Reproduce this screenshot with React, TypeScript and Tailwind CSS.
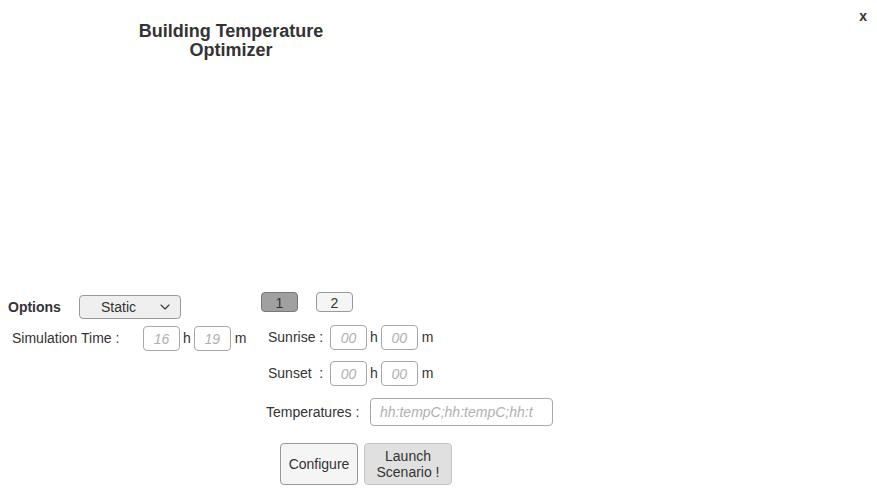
import { ChevronDown } from "lucide-react";

function TimeInput({ placeholder }: { placeholder: string }) {
  return (
    <input
      placeholder={placeholder}
      className="w-[37px] h-[25px] rounded-[4px] border border-[#a8a8a8] bg-white text-center text-[14px] italic text-[#333] placeholder:text-[#b0b0b0] outline-none"
    />
  );
}

function TimeRow({ label, labelWidth, a, b }: { label: string; labelWidth: string; a: string; b: string }) {
  return (
    <div className="flex items-center h-[25px]">
      <span className={labelWidth}>{label}</span>
      <TimeInput placeholder={a} />
      <span className="mx-[3px]">h</span>
      <TimeInput placeholder={b} />
      <span className="ml-[4px]">m</span>
    </div>
  );
}

export default function App() {
  return (
    <div
      className="w-[877px] h-[495px] bg-white text-[14px] text-[#333] overflow-hidden"
      style={{ fontFamily: '"Liberation Sans", Arial, sans-serif' }}
    >
      <div className="flex">
        <div className="w-[462px] pt-[22px] text-center text-[18px] font-bold leading-[19px] text-[#333]">
          Building Temperature
          <br />
          Optimizer
        </div>
        <div className="flex-1 flex justify-end pr-[10px] pt-[6px]">
          <span className="font-bold text-[14px]">x</span>
        </div>
      </div>

      <div className="flex mt-[232px]">
        {/* left panel */}
        <div className="w-[261px] pl-[8px] pt-[3px] flex flex-col">
          <div className="flex items-center h-[24px]">
            <span className="w-[71px] font-bold">Options</span>
            <button className="w-[102px] h-[24px] rounded-[4px] border border-[#999] bg-[#efefef] flex items-center pl-[21px] pr-[7px]">
              <span className="flex-1 text-left">Static</span>
              <ChevronDown className="w-[16px] h-[16px]" strokeWidth={1.6} />
            </button>
          </div>
          <div className="mt-[7px] pl-[4px]">
            <TimeRow label="Simulation Time :" labelWidth="w-[131px]" a="16" b="19" />
          </div>
        </div>

        {/* right panel */}
        <div className="flex flex-col">
          <div className="flex gap-[18px]">
            <button className="w-[37px] h-[20px] rounded-[4px] border border-[#777] bg-[#a0a0a0]">1</button>
            <button className="w-[37px] h-[20px] rounded-[4px] border border-[#999] bg-[#f5f5f5]">2</button>
          </div>
          <div className="mt-[13px] pl-[7px] flex flex-col gap-[11px]">
            <TimeRow label="Sunrise :" labelWidth="w-[62px]" a="00" b="00" />
            <TimeRow label="Sunset  :" labelWidth="w-[62px] whitespace-pre" a="00" b="00" />
          </div>
          <div className="mt-[12px] pl-[5px] flex items-center">
            <span className="w-[104px]">Temperatures :</span>
            <input
              placeholder="hh:tempC;hh:tempC;hh:t"
              className="w-[183px] h-[28px] rounded-[4px] border border-[#a8a8a8] bg-white px-[9px] text-[14px] italic placeholder:text-[#b0b0b0] outline-none"
            />
          </div>
          <div className="mt-[17px] pl-[19px] flex gap-[6px]">
            <button className="w-[78px] h-[42px] rounded-[4px] border border-[#999] bg-[#f5f5f5]">Configure</button>
            <button className="w-[88px] h-[42px] rounded-[4px] border border-[#c4c4c4] bg-[#e0e0e0] leading-[16px]">
              Launch
              <br />
              Scenario !
            </button>
          </div>
        </div>
      </div>
    </div>
  );
}
